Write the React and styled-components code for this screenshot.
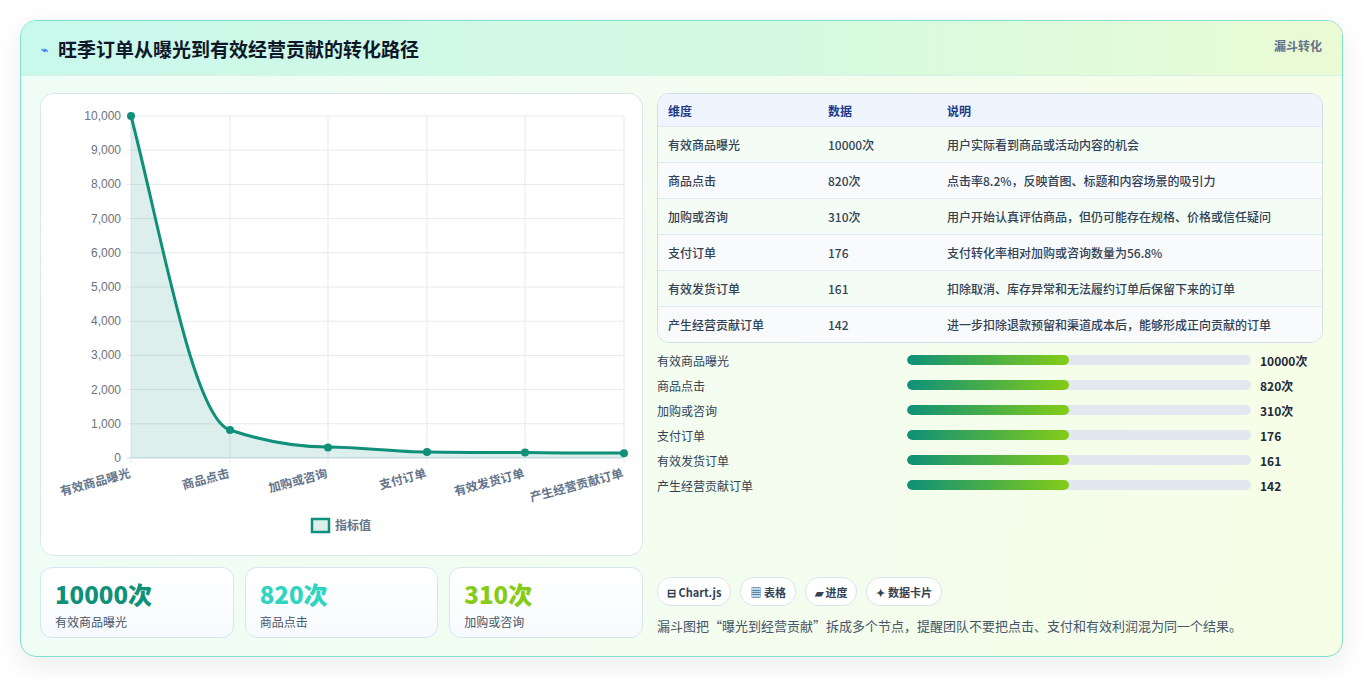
import React from "react";
import styled, { createGlobalStyle } from "styled-components";

const G = createGlobalStyle`
  body{margin:0;background:#fff;font-family:"Noto Sans CJK SC","Noto Sans",sans-serif;}
`;
const Page = styled.div`padding:20px 20px 21px 20px;`;
const Card = styled.div`
  border:1px solid #7ee0cf;border-radius:16px;overflow:hidden;
  box-shadow:0 10px 30px rgba(15,23,42,.08);
  background:linear-gradient(100deg,#effdf7 0%,#f3fdf0 50%,#f6fee6 100%);
`;
const Header = styled.div`
  height:54px;display:flex;align-items:center;justify-content:space-between;
  padding:0 20px 0 20px;border-bottom:1px solid #d5f3e6;
  background:linear-gradient(90deg,#c9f8ec 0%,#d6fae0 60%,#eafbd4 100%);
`;
const Title = styled.h1`margin:0;font-size:19px;font-weight:700;color:#0f172a;display:flex;align-items:center;gap:10px;`;
const Icon = styled.span`color:#3b82f6;font-size:12px;`;
const Tag = styled.span`font-size:12px;font-weight:700;color:#64748b;align-self:flex-start;margin-top:16px;`;
const Body = styled.div`display:grid;grid-template-columns:603px 666px;gap:14px;padding:17px 19px 18px 19px;`;
const Col = styled.div`display:flex;flex-direction:column;gap:11px;`;
const ChartCard = styled.div`height:461px;background:#fff;border:1px solid #dbe7ee;border-radius:14px;overflow:hidden;`;
const Stats = styled.div`display:grid;grid-template-columns:repeat(3,1fr);gap:11px;`;
const Stat = styled.div`height:71px;border:1px solid #d6e6ef;border-radius:12px;background:linear-gradient(#fff,#f7fafe);padding:10px 14px;box-sizing:border-box;`;
const Big = styled.div`font-size:24px;font-weight:800;color:${p=>p.c};line-height:32px;`;
const Small = styled.div`font-size:12px;color:#475569;margin-top:3px;`;
const Table = styled.div`border:1px solid #cfdde7;border-radius:12px;overflow:hidden;background:#fff;`;
const Row = styled.div`
  display:grid;grid-template-columns:160px 119px 1fr;padding:0 10px;height:${p=>p.h?32:35}px;align-items:center;
  font-size:12px;font-weight:${p=>p.h?700:500};color:${p=>p.h?"#1e3a8a":"#334155"};
  background:${p=>p.h?"#eef5ff":p.alt?"#f8fafc":"#f3fdf6"};border-top:${p=>p.first?"none":"1px solid "+(p.h?"#cbd5e1":"#e2e8f0")};
`;
const Bars = styled.div`display:flex;flex-direction:column;gap:7px;margin-top:8px;`;
const BarRow = styled.div`display:grid;grid-template-columns:250px 344px 1fr;align-items:center;height:18px;font-size:12px;color:#334155;`;
const Track = styled.div`height:10px;border-radius:5px;background:#e2e8f0;overflow:hidden;`;
const Fill = styled.div`height:100%;border-radius:5px;background:linear-gradient(90deg,#0f9079,#84cc16);`;
const Val = styled.span`padding-left:9px;font-weight:700;color:#1e293b;`;
const Chips = styled.div`display:flex;gap:9px;margin-top:auto;`;
const Chip = styled.span`height:27px;padding:0 9px;border:1px solid #dbe4ee;border-radius:14px;background:#fff;display:flex;align-items:center;gap:4px;font-size:11px;font-weight:700;color:#334155;`;
const Note = styled.p`margin:10px 0 3px;font-size:13px;color:#475569;`;

const rows=[["有效商品曝光","10000次","用户实际看到商品或活动内容的机会"],["商品点击","820次","点击率8.2%，反映首图、标题和内容场景的吸引力"],["加购或咨询","310次","用户开始认真评估商品，但仍可能存在规格、价格或信任疑问"],["支付订单","176","支付转化率相对加购或咨询数量为56.8%"],["有效发货订单","161","扣除取消、库存异常和无法履约订单后保留下来的订单"],["产生经营贡献订单","142","进一步扣除退款预留和渠道成本后，能够形成正向贡献的订单"]];
const xs=[130,229,327,426,524,623];
const vals=[10000,820,310,176,161,142];
const Y=v=>457-v*0.0342;

function Chart(){
  const pts=vals.map((v,i)=>[xs[i],Y(v)]);
  const line="M130,115 C160,230 192,418 229,429 C262,440 292,446 327,446 C360,446 393,451 426,451 C459,451.5 491,451.5 524,451.5 C557,452 590,452 623,452";
  return(
  <svg width="602" height="461" viewBox="40 93 602 461" style={{display:"block"}}>
    {Array.from({length:11},(_,i)=>{const y=Y(i*1000);return <g key={i}>
      <line x1="126" x2="623" y1={y} y2={y} stroke={i?"#e5e9ef":"#cbd5e1"}/>
      <text x="120" y={y+4} fontSize="12" textAnchor="end" fill="#6b7280" fontFamily="Liberation Sans,sans-serif">{(i*1000).toLocaleString("en-US")}</text></g>})}
    {xs.map(x=><line key={x} x1={x} x2={x} y1="115" y2="462" stroke="#e5e9ef"/>)}
    <path d={line+" L623,457 L130,457Z"} fill="rgba(15,144,121,.14)"/>
    <path d={line} fill="none" stroke="#0f9079" strokeWidth="3"/>
    {pts.map(([x,y])=><circle key={x} cx={x} cy={y} r="4" fill="#0f9079"/>)}
    {rows.map((r,i)=><text key={i} x={xs[i]} y="476" fontSize="12" fontWeight="600" fill="#64748b" textAnchor="end" transform={`rotate(-15 ${xs[i]} 476)`}>{r[0]}</text>)}
    <rect x="311" y="518" width="17" height="13" fill="#dcefed" stroke="#0f9079" strokeWidth="2.5"/>
    <text x="334" y="529" fontSize="12" fill="#64748b" fontWeight="600">指标值</text>
  </svg>);
}

export default function App(){
  return(<Page><G/><Card>
    <Header><Title><Icon>⌁</Icon>旺季订单从曝光到有效经营贡献的转化路径</Title><Tag>漏斗转化</Tag></Header>
    <Body>
      <Col>
        <ChartCard><Chart/></ChartCard>
        <Stats>
          <Stat><Big c="#0f9079">10000次</Big><Small>有效商品曝光</Small></Stat>
          <Stat><Big c="#2dd4bf">820次</Big><Small>商品点击</Small></Stat>
          <Stat><Big c="#84cc16">310次</Big><Small>加购或咨询</Small></Stat>
        </Stats>
      </Col>
      <Col style={{gap:0}}>
        <Table>
          <Row h first><span>维度</span><span>数据</span><span>说明</span></Row>
          {rows.map((r,i)=><Row key={i} alt={i%2===1}><span>{r[0]}</span><span>{r[1]}</span><span>{r[2]}</span></Row>)}
        </Table>
        <Bars>{rows.map((r,i)=><BarRow key={i}><span>{r[0]}</span><Track><Fill style={{width:"47%"}}/></Track><Val>{r[1]}</Val></BarRow>)}</Bars>
        <Chips><Chip>⊟ Chart.js</Chip><Chip>▦ 表格</Chip><Chip>▰ 进度</Chip><Chip>✦ 数据卡片</Chip></Chips>
        <Note>漏斗图把“曝光到经营贡献”拆成多个节点，提醒团队不要把点击、支付和有效利润混为同一个结果。</Note>
      </Col>
    </Body>
  </Card></Page>);
}
